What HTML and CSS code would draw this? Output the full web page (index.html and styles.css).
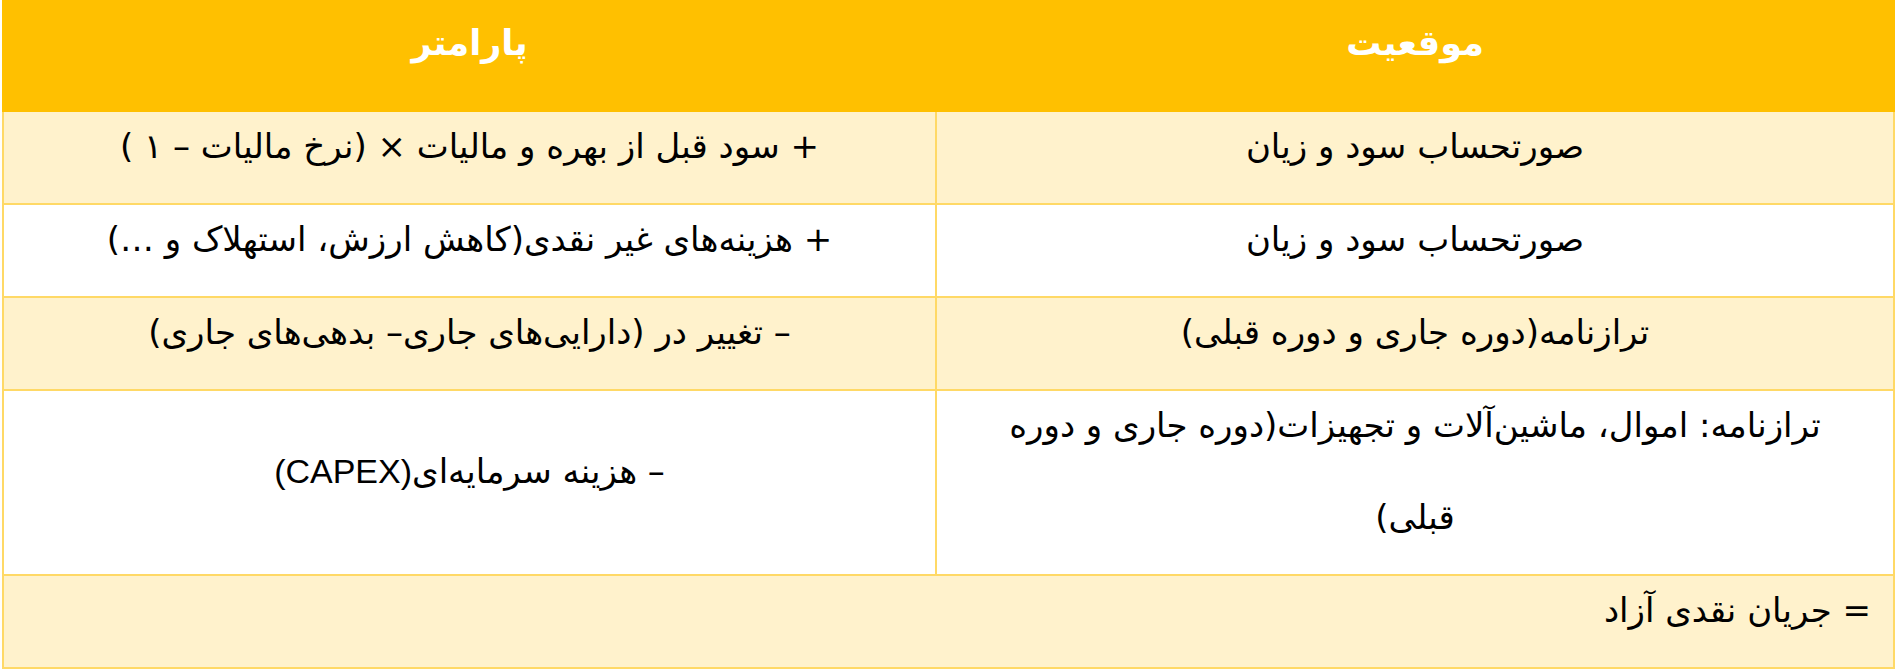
FILE: index.html
```html
<!DOCTYPE html>
<html lang="fa" dir="rtl">
<head>
<meta charset="utf-8">
<title>جریان نقدی آزاد</title>
<link rel="stylesheet" href="styles.css">
</head>
<body>
<table class="fcf">
  <thead>
    <tr>
      <th class="col-loc">موقعیت</th>
      <th class="col-param">پارامتر</th>
    </tr>
  </thead>
  <tbody>
    <tr class="odd">
      <td><div class="txt">صورتحساب سود و زیان</div></td>
      <td><div class="txt">+ سود قبل از بهره و مالیات × (نرخ مالیات – ۱ )</div></td>
    </tr>
    <tr class="even">
      <td><div class="txt">صورتحساب سود و زیان</div></td>
      <td><div class="txt">+ هزینه‌های غیر نقدی(کاهش ارزش، استهلاک و …)</div></td>
    </tr>
    <tr class="odd">
      <td><div class="txt">ترازنامه(دوره جاری و دوره قبلی)</div></td>
      <td><div class="txt">– تغییر در (دارایی‌های جاری– بدهی‌های جاری)</div></td>
    </tr>
    <tr class="even">
      <td><div class="txt">ترازنامه: اموال، ماشین‌آلات و تجهیزات(دوره جاری و دوره<br>قبلی)</div></td>
      <td class="mid"><div class="txt">– هزینه سرمایه‌ای<span class="latin">(CAPEX)</span></div></td>
    </tr>
    <tr class="odd">
      <td colspan="2" class="total"><div class="txt">= جریان نقدی آزاد</div></td>
    </tr>
  </tbody>
</table>
</body>
</html>
```
FILE: styles.css
```css
html, body {
  margin: 0;
  padding: 0;
  background: #ffffff;
}

body {
  font-family: "DejaVu Sans", "Noto Sans", sans-serif;
  color: #000000;
}

.fcf {
  width: 1893px;
  border-collapse: collapse;
  table-layout: fixed;
  direction: rtl;
}

.fcf th {
  background: #ffc000;
  color: #ffffff;
  font-weight: bold;
  font-size: 35px;
  height: 108px;
  padding: 0;
  vertical-align: top;
  line-height: 82px;
  text-align: center;
  border: 2px solid #ffc000;
}

.fcf .col-loc {
  width: 956px;
}

.fcf td {
  border: 2px solid #ffd966;
  padding: 0 30px 11px;
  vertical-align: top;
  text-align: center;
  font-size: 34px;
  line-height: 92px;
}

.fcf td .txt {
  margin-top: -12px;
}

.fcf td .latin {
  font-family: "Liberation Sans", Arial, sans-serif;
  font-size: 34px;
}

.fcf td.mid {
  vertical-align: middle;
}

.fcf tr.odd td {
  background: #fff2cc;
}

.fcf tr.even td {
  background: #ffffff;
}

.fcf td.total {
  text-align: right;
  padding-right: 22px;
}
```
